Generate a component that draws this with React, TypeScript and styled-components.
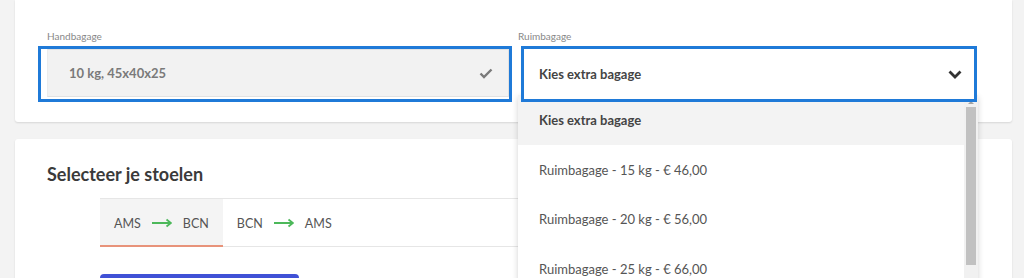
import React from "react";
import styled, { createGlobalStyle } from "styled-components";

const Global = createGlobalStyle`
  html, body { margin: 0; padding: 0; }
  body {
    background: #f3f3f3;
    font-family: Lato, "Open Sans", Arial, sans-serif;
    color: #444;
    overflow: hidden;
  }
`;

const Page = styled.div`
  display: flex;
  flex-direction: column;
  gap: 17px;
  padding: 0 12px 0 15px;
  height: 278px;
  overflow: hidden;
`;

const Card = styled.section<{ $top?: boolean }>`
  background: #fff;
  border-radius: ${(p) => (p.$top ? "0 0 3px 3px" : "3px 3px 0 0")};
  box-shadow: 0 1px 2px rgba(0, 0, 0, 0.12);
  flex-shrink: 0;
`;

const BaggageCard = styled(Card)`
  position: relative;
  z-index: 3;
  height: 122px;
  box-sizing: border-box;
  padding: 30px 34px 0 32px;
  display: flex;
  gap: 6px;
`;

const Column = styled.div<{ $width: number }>`
  position: relative;
  width: ${(p) => p.$width}px;
  display: flex;
  flex-direction: column;
`;

const Label = styled.div`
  font-size: 10px;
  line-height: 12px;
  color: #888;
  margin-bottom: 4px;
`;

const Frame = styled.div<{ $shift: number; $width: number }>`
  position: relative;
  z-index: 2;
  box-sizing: border-box;
  height: 56px;
  width: ${(p) => p.$width}px;
  margin-left: ${(p) => p.$shift}px;
  border: 3px solid #1f7ad8;
  background: #fff;
  display: flex;
`;

const GreyField = styled.div`
  flex: 1;
  margin: 0 0 2px 6px;
  background: #f2f2f2;
  border: 1px solid #e2e2e2;
  border-left-color: #ececec;
  display: flex;
  align-items: center;
  justify-content: space-between;
  padding: 0 15px 0 21px;
  font-size: 13px;
  font-weight: 700;
  color: #7a7a7a;
`;

const SelectField = styled.div`
  flex: 1;
  display: flex;
  align-items: center;
  justify-content: space-between;
  padding: 0 12px 0 15px;
  font-size: 13px;
  font-weight: 700;
  color: #444;
`;

const DropList = styled.div`
  position: absolute;
  left: 0;
  top: 65px;
  width: 460px;
  height: 200px;
  background: #fff;
  box-shadow: 0 2px 6px rgba(0, 0, 0, 0.18);
  display: flex;
  z-index: 1;
`;

const Options = styled.div`
  flex: 1;
  display: flex;
  flex-direction: column;
`;

const Option = styled.div<{ $active?: boolean }>`
  height: 49.5px;
  flex-shrink: 0;
  display: flex;
  align-items: center;
  padding-left: 21px;
  padding-top: 1px;
  box-sizing: border-box;
  font-size: 13px;
  font-weight: ${(p) => (p.$active ? 700 : 400)};
  color: ${(p) => (p.$active ? "#444" : "#555")};
  background: ${(p) => (p.$active ? "#f3f3f3" : "#fff")};
`;

const ScrollTrack = styled.div`
  width: 14px;
  background: #f1f1f1;
  display: flex;
  flex-direction: column;
  align-items: center;
  padding-top: 6px;
  gap: 3px;
`;

const ScrollArrow = styled.div`
  width: 0;
  height: 0;
  border-left: 3px solid transparent;
  border-right: 3px solid transparent;
  border-bottom: 3px solid #a3a3a3;
`;

const ScrollThumb = styled.div`
  width: 10px;
  height: 158px;
  background: #c1c1c1;
`;

const SeatsCard = styled(Card)`
  flex: 1;
  padding: 23px 32px 0 32px;
  display: flex;
  flex-direction: column;
`;

const Heading = styled.h2`
  margin: 0;
  font-size: 18px;
  line-height: 24px;
  font-weight: 700;
  color: #3a3a3a;
`;

const Tabs = styled.div`
  margin: 12px 0 0 53px;
  width: 830px;
  display: flex;
  border-top: 1px solid #e6e6e6;
  border-bottom: 1px solid #e6e6e6;
`;

const Tab = styled.div<{ $active?: boolean }>`
  height: 48px;
  box-sizing: border-box;
  display: flex;
  align-items: center;
  gap: 11px;
  padding: 2px 14px 0;
  font-size: 12.5px;
  color: #555;
  background: ${(p) => (p.$active ? "#f4f4f4" : "transparent")};
  border-bottom: 2px solid ${(p) => (p.$active ? "#e8937a" : "transparent")};
  margin-bottom: -1px;
`;

const Button = styled.div`
  margin: 27px 0 0 53px;
  width: 199px;
  height: 40px;
  border-radius: 4px;
  background: #4051d6;
`;

const Check = () => (
  <svg width="14" height="11" viewBox="0 0 14 11">
    <path d="M1.5 5.5 L5 9 L12.5 1.5" fill="none" stroke="#7a7a7a" strokeWidth="2.4" />
  </svg>
);

const Chevron = () => (
  <svg width="14" height="9" viewBox="0 0 14 9">
    <path d="M1.5 1.5 L7 7 L12.5 1.5" fill="none" stroke="#333" strokeWidth="2.8" />
  </svg>
);

const Arrow = () => (
  <svg width="20" height="10" viewBox="0 0 20 10">
    <path d="M0 5 H18.5 M14.5 1.5 L19 5 L14.5 8.5" fill="none" stroke="#4cb85a" strokeWidth="1.8" />
  </svg>
);

const options = [
  "Ruimbagage - 15 kg - € 46,00",
  "Ruimbagage - 20 kg - € 56,00",
  "Ruimbagage - 25 kg - € 66,00",
];

export default function App() {
  return (
    <>
      <Global />
      <Page>
        <BaggageCard $top>
          <Column $width={465}>
            <Label>Handbagage</Label>
            <Frame $shift={-9} $width={474}>
              <GreyField>
                <span>10 kg, 45x40x25</span>
                <Check />
              </GreyField>
            </Frame>
          </Column>
          <Column $width={460}>
            <Label>Ruimbagage</Label>
            <Frame $shift={3} $width={456}>
              <SelectField>
                <span>Kies extra bagage</span>
                <Chevron />
              </SelectField>
            </Frame>
            <DropList>
              <Options>
                <Option $active>Kies extra bagage</Option>
                {options.map((o) => (
                  <Option key={o}>{o}</Option>
                ))}
              </Options>
              <ScrollTrack>
                <ScrollArrow />
                <ScrollThumb />
              </ScrollTrack>
            </DropList>
          </Column>
        </BaggageCard>
        <SeatsCard>
          <Heading>Selecteer je stoelen</Heading>
          <Tabs>
            <Tab $active>
              <span>AMS</span>
              <Arrow />
              <span>BCN</span>
            </Tab>
            <Tab>
              <span>BCN</span>
              <Arrow />
              <span>AMS</span>
            </Tab>
          </Tabs>
          <Button />
        </SeatsCard>
      </Page>
    </>
  );
}
